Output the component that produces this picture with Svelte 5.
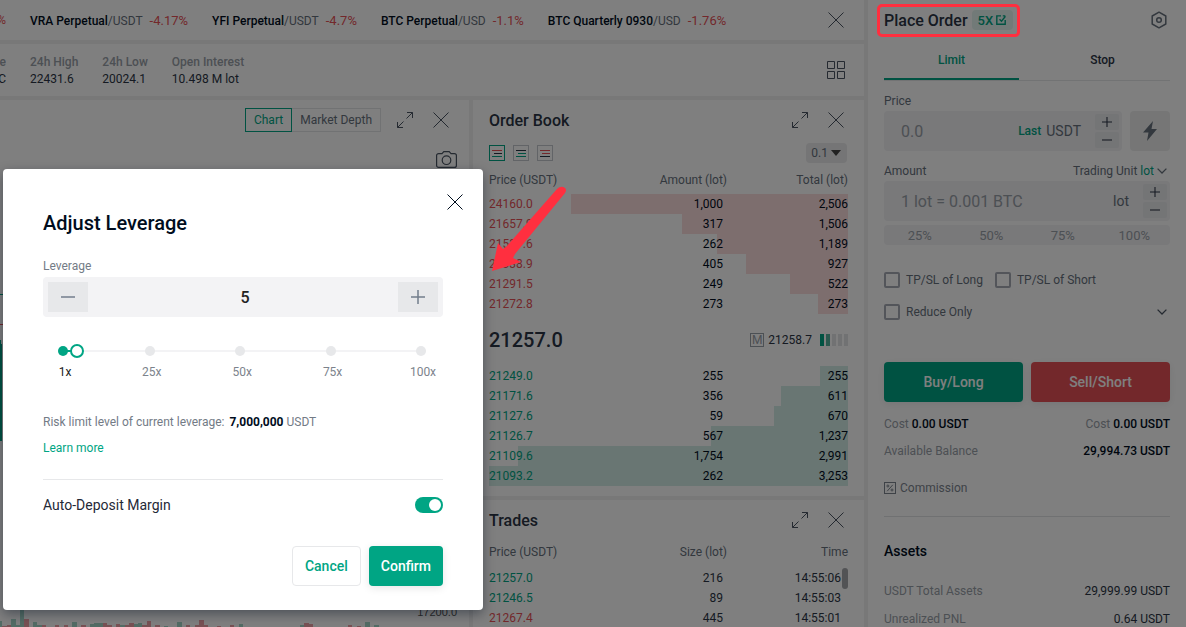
<script>
    let leverage = $state(5);
    let autoDeposit = $state(true);

    const tickers = [
        { name: 'VRA Perpetual', unit: 'USDT', change: '-4.17%' },
        { name: 'YFI Perpetual', unit: 'USDT', change: '-4.7%' },
        { name: 'BTC Perpetual', unit: 'USD', change: '-1.1%' },
        { name: 'BTC Quarterly 0930', unit: 'USD', change: '-1.76%' }
    ];
    const stats = [
        ['24h High', '22431.6'],
        ['24h Low', '20024.1'],
        ['Open Interest', '10.498 M lot']
    ];
    const asks = [
        ['24160.0', 1000, 2506],
        ['21657.9', 317, 1506],
        ['21537.6', 262, 1189],
        ['21338.9', 405, 927],
        ['21291.5', 249, 522],
        ['21272.8', 273, 273]
    ];
    const bids = [
        ['21249.0', 255, 255],
        ['21171.6', 356, 611],
        ['21127.6', 59, 670],
        ['21126.7', 567, 1237],
        ['21109.6', 1754, 2991],
        ['21093.2', 262, 3253]
    ];
    const trades = [
        ['21257.0', '216', '14:55:06', 'up'],
        ['21246.5', '89', '14:55:03', 'up'],
        ['21267.4', '445', '14:55:01', 'down']
    ];
    const maxTotal = 3253;
    const depth = (total) => 100 - (total / maxTotal) * 100;
    const num = (n) => n.toLocaleString('en-US');

    // x, width, height, up
    const volumes = [
        [0, 2, 6, 1], [2, 5, 1, 0], [7, 4, 2, 0], [11, 5, 8, 1], [16, 4, 2, 1], [20, 4, 17, 1], [24, 5, 8, 0],
        [33, 4, 5, 1], [37, 5, 2, 1], [42, 4, 2, 0], [55, 4, 2, 0], [64, 4, 2, 0], [72, 5, 5, 1],
        [81, 5, 2, 0], [90, 4, 3, 1], [94, 9, 4, 1], [103, 4, 4, 0], [107, 5, 2, 0], [116, 4, 3, 0],
        [120, 5, 2, 1], [125, 4, 2, 0], [129, 5, 4, 0], [134, 4, 3, 1], [138, 4, 4, 1], [142, 5, 2, 0],
        [147, 4, 6, 0], [155, 5, 2, 0], [164, 4, 1, 1], [177, 5, 5, 1], [186, 4, 2, 0], [195, 4, 2, 0],
        [199, 5, 7, 0], [204, 4, 2, 0], [217, 4, 1, 0], [230, 4, 2, 0], [239, 4, 3, 1], [300, 4, 2, 1],
        [304, 5, 4, 0], [309, 4, 3, 0], [348, 4, 2, 0], [357, 4, 1, 0], [365, 5, 5, 1], [374, 5, 2, 1]
    ];
    const ticks = [1, 25, 50, 75, 100];

    function step(by) {
        leverage = Math.min(100, Math.max(1, Number(leverage) + by));
    }
</script>

{#snippet closeIcon()}
    <svg width="16" height="16" viewBox="0 0 16 16" fill="none" stroke="currentColor"><path d="M.5.5l15 15M15.5.5l-15 15" /></svg>
{/snippet}
{#snippet expandIcon()}
    <svg width="16" height="16" viewBox="0 0 16 16" fill="none" stroke="currentColor"><path d="M10 .5h5.5V6M15.5.5l-6 6M.5 10v5.5H6M.5 15.5l6-6" /></svg>
{/snippet}
{#snippet plus(size)}
    <svg width={size} height={size} viewBox="0 0 14 14" fill="none" stroke="currentColor" stroke-width="1.5"><path d="M0 7h14M7 0v14" /></svg>
{/snippet}
{#snippet minus(size)}
    <svg width={size} height={size} viewBox="0 0 14 14" fill="none" stroke="currentColor" stroke-width="1.5"><path d="M0 7h14" /></svg>
{/snippet}
{#snippet chevron()}
    <svg width="10" height="6" viewBox="0 0 10 6" fill="none" stroke="currentColor" stroke-width="1.3"><path d="M.6.6L5 5 9.4.6" /></svg>
{/snippet}
{#snippet bookRows(rows, side)}
    {#each rows as [price, amount, total]}
        <tr class={side} style="--from: {depth(total)}%">
            <td>{price}</td>
            <td>{num(amount)}</td>
            <td>{num(total)}</td>
        </tr>
    {/each}
{/snippet}

<div class="page">
    <main>
        <div class="panel ticker">
            <div class="clipped down">%</div>
            {#each tickers as t}
                <div class="ticker-item"><span><b>{t.name}</b>/{t.unit}</span><span class="down">{t.change}</span></div>
            {/each}
            <button class="icon push" aria-label="Close ticker">{@render closeIcon()}</button>
        </div>

        <div class="panel stats">
            <dl class="clipped"><dt>e</dt><dd>C</dd></dl>
            {#each stats as [label, value]}
                <dl><dt>{label}</dt><dd>{value}</dd></dl>
            {/each}
            <button class="icon push" aria-label="Layout">
                <svg width="18" height="18" viewBox="0 0 18 18" fill="none" stroke="currentColor"><path d="M.5.5h7v7h-7zM10.5.5h7v7h-7zM.5 10.5h7v7h-7zM10.5 10.5h7v7h-7z" /></svg>
            </button>
        </div>

        <div class="columns">
            <section class="panel chart">
                <header class="panel-head">
                    <div class="segmented">
                        <button class="on">Chart</button><button>Market Depth</button>
                    </div>
                    <button class="icon" aria-label="Expand chart">{@render expandIcon()}</button>
                    <button class="icon" aria-label="Close chart">{@render closeIcon()}</button>
                </header>
                <div class="chart-body">
                    <svg class="plot" width="469" height="487" viewBox="0 0 469 487">
                        <rect x="0" y="154" width="3" height="1" fill="#00a584" />
                        <rect x="0" y="184" width="3" height="1" fill="#e65157" />
                        <rect x="0" y="200" width="1" height="4" fill="#00a584" />
                        <rect x="0" y="204" width="2" height="97" fill="#00a584" />
                        {#each volumes as [x, w, h, up]}
                            <rect {x} y={487 - h} width={w} height={h} fill={up ? '#a6d8ca' : '#f0a3a8'} />
                        {/each}
                        <text x="457" y="476" text-anchor="end">17200.0</text>
                    </svg>
                    <button class="icon camera" aria-label="Snapshot">
                        <svg width="21" height="17" viewBox="0 0 21 17" fill="none" stroke="currentColor" stroke-width="1.2"><path d="M2.6 2.6h3.400l1.800-2h5.400l1.800 2h3.400a2 2 0 0 1 2 2v9.800a2 2 0 0 1-2 2H2.600a2 2 0 0 1-2-2V4.600a2 2 0 0 1 2-2z" /><circle cx="10.5" cy="9.2" r="4.3" /></svg>
                    </button>
                </div>
            </section>

            <div class="books">
                <section class="panel book">
                    <header class="panel-head">
                        <h2>Order Book</h2>
                        <button class="icon" aria-label="Expand order book">{@render expandIcon()}</button>
                        <button class="icon" aria-label="Close order book">{@render closeIcon()}</button>
                    </header>
                    <div class="book-tools">
                        {#each [['#e65157', '#2b3545', '#00a584'], ['#2b3545', '#00a584', '#00a584'], ['#e65157', '#e65157', '#2b3545']] as c, i}
                            <button class="icon mode" class:on={i === 0} aria-label="Book view {i + 1}">
                                <svg width="16" height="16" viewBox="0 0 16 16" fill="none">
                                    <rect x=".5" y=".5" width="15" height="15" stroke="currentColor" />
                                    <path d="M3 5.5h10" stroke={c[0]} /><path d="M5 8.5h8" stroke={c[1]} /><path d="M3 11.5h10" stroke={c[2]} />
                                </svg>
                            </button>
                        {/each}
                        <button class="precision">0.1 <svg width="10" height="6" viewBox="0 0 10 6"><path d="M0 0h10L5 6z" fill="currentColor" /></svg></button>
                    </div>
                    <table>
                        <thead><tr><th>Price (USDT)</th><th>Amount (lot)</th><th>Total (lot)</th></tr></thead>
                        <tbody>{@render bookRows(asks, 'ask')}</tbody>
                    </table>
                    <div class="last-price">
                        <strong>21257.0</strong>
                        <span class="mark">M</span>
                        <span>21258.7</span>
                        <span class="adl"><i class="full"></i><i class="half"></i><i></i><i></i><i></i></span>
                    </div>
                    <table>
                        <tbody>{@render bookRows(bids, 'bid')}</tbody>
                    </table>
                </section>

                <section class="panel trades">
                    <header class="panel-head">
                        <h2>Trades</h2>
                        <button class="icon" aria-label="Expand trades">{@render expandIcon()}</button>
                        <button class="icon" aria-label="Close trades">{@render closeIcon()}</button>
                    </header>
                    <div class="trade-list">
                        <table>
                            <thead><tr><th>Price (USDT)</th><th>Size (lot)</th><th>Time</th></tr></thead>
                            <tbody>
                                {#each trades as [price, size, time, dir]}
                                    <tr><td class={dir}>{price}</td><td>{size}</td><td>{time}</td></tr>
                                {/each}
                            </tbody>
                        </table>
                        <div class="scroll-thumb"></div>
                    </div>
                </section>
            </div>
        </div>
    </main>

    <aside class="panel">
        <header class="order-head">
            <h2>Place Order</h2>
            <button class="lev-badge">5X
                <svg width="10" height="10" viewBox="0 0 10 10" fill="none" stroke="currentColor" stroke-width="1.4"><path d="M5 .9H.8v8.300h8.400V5M3.500 4.300l2 2L9.500 1.200M6.800.9h2.500" /></svg>
            </button>
            <button class="icon push" aria-label="Settings">
                <svg width="16" height="18" viewBox="0 0 16 18" fill="none" stroke="currentColor" stroke-width="1.5"><path d="M8 1.200l6.800 3.800v8L8 16.800 1.200 13V5z" stroke-linejoin="round" /><circle cx="8" cy="9" r="2.3" /></svg>
            </button>
        </header>
        <nav class="tabs">
            <a class="on" href="#limit">Limit</a>
            <a href="#stop">Stop</a>
        </nav>

        <div class="field-label"><label for="price">Price</label></div>
        <div class="price-row">
            <div class="field">
                <input id="price" placeholder="0.0" />
                <button class="last">Last</button>
                <span class="unit">USDT</span>
                <div class="stepper"><button aria-label="Raise price">{@render plus(10)}</button><button aria-label="Lower price">{@render minus(10)}</button></div>
            </div>
            <button class="flash" aria-label="Market price">
                <svg width="14" height="20" viewBox="0 0 14 20"><path d="M10 0L0 11.500h5.500L4 20l10-12H8.500z" fill="currentColor" /></svg>
            </button>
        </div>
        <div class="field-label">
            <label for="amount">Amount</label>
            <button class="trading-unit">Trading Unit <span>lot</span> {@render chevron()}</button>
        </div>
        <div class="field">
            <input id="amount" placeholder="1 lot = 0.001 BTC" />
            <span class="unit">lot</span>
            <div class="stepper"><button aria-label="Raise amount">{@render plus(10)}</button><button aria-label="Lower amount">{@render minus(10)}</button></div>
        </div>
        <div class="percents">
            {#each ['25%', '50%', '75%', '100%'] as p}<button>{p}</button>{/each}
        </div>

        <div class="checks">
            <label><input type="checkbox" />TP/SL of Long</label>
            <label><input type="checkbox" />TP/SL of Short</label>
        </div>
        <div class="checks">
            <label><input type="checkbox" />Reduce Only</label>
            <button class="icon more" aria-label="More options">{@render chevron()}</button>
        </div>

        <div class="actions">
            <button class="buy">Buy/Long</button>
            <button class="sell">Sell/Short</button>
        </div>
        <div class="line"><span>Cost <b>0.00 USDT</b></span><span>Cost <b>0.00 USDT</b></span></div>
        <div class="line"><span>Available Balance</span><b>29,994.73 USDT</b></div>
        <a class="commission" href="#commission">
            <svg width="12" height="12" viewBox="0 0 12 12" fill="none" stroke="currentColor"><rect x=".5" y=".5" width="11" height="11" /><path d="M8.8 2.800l-5.600 6.400" /><circle cx="3.9" cy="4" r="1" /><circle cx="8" cy="8" r="1" /></svg>
            Commission
        </a>
        <h3>Assets</h3>
        <div class="line asset"><span>USDT Total Assets</span><em>29,999.99 USDT</em></div>
        <div class="line asset"><span>Unrealized PNL</span><em>0.64 USDT</em></div>
    </aside>

    <div class="mask"></div>

    <div class="modal" role="dialog" aria-labelledby="modal-title">
        <button class="icon modal-close" aria-label="Close">{@render closeIcon()}</button>
        <h1 id="modal-title">Adjust Leverage</h1>
        <label class="lev-label" for="leverage">Leverage</label>
        <div class="lev-input">
            <button aria-label="Decrease" onclick={() => step(-1)}>{@render minus(14)}</button>
            <input id="leverage" bind:value={leverage} />
            <button aria-label="Increase" onclick={() => step(1)}>{@render plus(14)}</button>
        </div>
        <div class="slider" style="--done: {((leverage - 1) / 99) * 100}%">
            <div class="ticks">
                {#each ticks as t}
                    <div class="tick" class:on={t <= leverage}><i></i><span>{t}x</span></div>
                {/each}
            </div>
            <input type="range" min="1" max="100" bind:value={leverage} aria-label="Leverage slider" />
        </div>
        <p class="risk">Risk limit level of current leverage: <b>7,000,000</b> USDT</p>
        <a class="learn" href="#learn">Learn more</a>
        <label class="deposit">Auto-Deposit Margin <input type="checkbox" role="switch" bind:checked={autoDeposit} /></label>
        <div class="modal-foot">
            <button class="cancel">Cancel</button>
            <button class="confirm">Confirm</button>
        </div>
    </div>

    <div class="highlight"></div>
    <svg class="arrow" width="76" height="88" viewBox="0 0 76 88"><path d="M74 2Q70-1 66 3L16 60 12 63 7 57 1 85 30 76 22 72 24 68 74 7Q76 4 74 2z" fill="#ff2f3f" /></svg>
</div>

<style>
    :global(body) { font-family: Roboto, sans-serif; font-size: 12px; color: #2b3545; }
    .page {
        position: relative;
        display: grid;
        grid-template-columns: 1fr 318px;
        gap: 4px;
        height: 100vh;
        overflow: hidden;
        background: #f1f1f1;
    }
    button, input { font: inherit; color: inherit; }
    button { border: none; background: none; padding: 0; cursor: pointer; }
    input { border: none; background: none; min-width: 0; outline: none; }
    a { text-decoration: none; color: inherit; }
    h1, h2, h3, p, dl, dd { margin: 0; font-weight: 500; }
    dd { font-weight: 400; }
    b { font-weight: 500; color: #000d1d; }
    svg { display: block; }
    .panel { background: #fff; }
    .up { color: #00a584; }
    .down { color: #e65157; }
    .icon { display: flex; align-items: center; justify-content: center; color: #4a5462; }
    .push { margin-left: auto; }

    main { display: flex; flex-direction: column; gap: 4px; min-width: 0; }
    .ticker, .stats { display: flex; align-items: center; gap: 24px; padding-right: 20px; white-space: nowrap; }
    .ticker { height: 40px; }
    .ticker-item { display: flex; align-items: baseline; gap: 7px; color: #66707c; }
    .ticker-item .down { font-size: 13px; }
    .clipped { width: 6px; display: flex; flex-direction: column; align-items: flex-end; overflow: hidden; }
    .stats { height: 52px; padding-right: 19px; line-height: 17px; }
    .stats dl { padding-top: 2px; }
    dt { color: #99a0a8; }

    .columns { flex: 1; display: grid; grid-template-columns: 1fr 391px; gap: 4px; min-height: 0; }
    .chart { display: flex; flex-direction: column; min-width: 0; }
    .panel-head { display: flex; align-items: center; justify-content: flex-end; gap: 20px; height: 40px; padding-right: 20px; }
    h2 { padding-top: 2px; font-size: 16px; line-height: 20px; color: #2b3545; }
    .panel-head h2 { margin-right: auto; }
    .segmented { display: flex; height: 24px; margin-right: -4px; color: #66707c; }
    .segmented button { padding: 0 8px; border: 1px solid #e2e4e6; border-left: none; }
    .segmented .on { border: 1px solid #00a584; color: #00a584; }
    .chart-body { position: relative; flex: 1; overflow: hidden; }
    .plot text { font-family: "Liberation Sans", sans-serif; font-size: 11px; fill: #555; }
    .camera { position: absolute; top: 11px; right: 12px; }

    .books { display: flex; flex-direction: column; gap: 4px; min-height: 0; }
    .book, .trades { padding-left: 16px; }
    .book { padding-bottom: 10px; }
    .trades { flex: 1; }
    .book-tools { display: flex; align-items: center; gap: 8px; height: 26px; padding-right: 17px; }
    .mode { color: #c5c9ce; }
    .mode.on { color: #00a584; }
    .precision { display: flex; align-items: center; gap: 3px; height: 20px; margin-left: auto; padding: 0 6px 0 5px; border-radius: 4px; background: #eaebec; color: #66707c; }
    .precision svg { color: #444; }
    table { width: calc(100% - 16px); border-collapse: collapse; table-layout: fixed; line-height: 20px; }
    th { padding: 4px 0; font-weight: 400; text-align: left; color: #66707c; }
    th:nth-child(2), td:nth-child(2) { width: 119px; text-align: right; }
    th:nth-child(3), td:nth-child(3) { width: 121px; text-align: right; }
    td { padding: 0; color: #000d1d; }
    td:nth-child(2) { padding-right: 4px; }
    .ask { --bar: #fadcdc; }
    .bid { --bar: #d2ece6; }
    .ask, .bid { background: linear-gradient(90deg, transparent var(--from), var(--bar) var(--from)); }
    .ask td:first-child, td.down { color: #e65157; }
    .bid td:first-child, td.up { color: #00a584; }
    .last-price { display: flex; align-items: center; gap: 4px; height: 52px; padding-right: 16px; }
    .last-price strong { margin-right: auto; font-size: 20px; font-weight: 500; }
    .mark { border: 1px solid #99a0a8; width: 12px; line-height: 12px; text-align: center; color: #99a0a8; }
    .adl { display: flex; gap: 2px; margin-left: 4px; }
    .adl i { width: 4px; height: 12px; background: #e2e4e6; }
    .adl .full { background: #00a584; }
    .adl .half { background: #55b09c; }
    .trade-list { position: relative; }
    .trade-list th { padding: 2px 0 6px; }
    .trade-list td:nth-child(3) { padding-right: 7px; color: #2b3545; }
    .trade-list td:nth-child(2) { color: #2b3545; }
    .scroll-thumb { position: absolute; top: 28px; right: 16px; width: 6px; height: 21px; border-radius: 3px; background: #a4a7ab; }

    aside { padding: 0 16px; white-space: nowrap; }
    .order-head { display: flex; align-items: center; gap: 4px; height: 40px; padding-right: 3px; }
    .lev-badge { display: flex; align-items: center; gap: 3px; height: 20px; padding: 0 7px 0 6px; border-radius: 4px; background: #e5f4f0; color: #00a584; font-size: 13px; font-weight: 500; }
    .order-head .icon { color: #66707c; }
    .tabs { display: grid; grid-template-columns: 1fr 1fr; gap: 16px; line-height: 36px; border-bottom: 1px solid #e5e6e8; text-align: center; font-weight: 500; }
    .tabs a { padding-top: 2px; border-bottom: 2px solid transparent; }
    .tabs .on { color: #00a584; border-color: #00a584; }
    .field-label { display: flex; justify-content: space-between; align-items: center; height: 20px; margin-top: 10px; color: #66707c; }
    .price-row { display: flex; gap: 8px; }
    .field { flex: 1; display: flex; align-items: center; height: 40px; padding: 0 3px 0 17px; border-radius: 4px; background: #f2f2f4; box-sizing: border-box; }
    .field input { flex: 1; width: 60px; font-size: 16px; padding: 0; }
    .field input::placeholder { color: #99a0a8; }
    .last { color: #00a584; font-weight: 500; margin-right: 5px; }
    .unit { font-size: 14px; color: #66707c; margin-right: 14px; }
    .stepper { display: grid; gap: 2px; }
    .stepper button { display: flex; align-items: center; justify-content: center; width: 24px; height: 16px; border-radius: 2px; background: #e9eaec; }
    .flash { display: flex; align-items: center; justify-content: center; width: 40px; border-radius: 4px; background: #eceded; color: #66707c; }
    .trading-unit { display: flex; align-items: center; gap: 3px; margin-right: 3px; }
    .trading-unit span { color: #00a584; }
    .percents { display: grid; grid-template-columns: repeat(4, 1fr); margin-top: 4px; height: 20px; border-radius: 4px; background: #f2f2f4; color: #99a0a8; font-size: 13px; }
    .checks { display: flex; align-items: center; gap: 12px; height: 16px; margin-top: 16px; color: #66707c; }
    .percents + .checks { margin-top: 27px; }
    .checks label { display: flex; align-items: center; gap: 6px; }
    .checks input { appearance: none; width: 16px; height: 16px; margin: 0; border: 2px solid #a7abb5; border-radius: 2px; }
    .more { margin: 0 3px 0 auto; }
    .actions { display: grid; grid-template-columns: 1fr 1fr; gap: 8px; margin: 42px 0 9px; }
    .actions button { height: 40px; border-radius: 4px; font-size: 14px; font-weight: 500; color: #fff; box-shadow: 0 2px 8px rgba(0, 13, 29, 0.08); }
    .buy { background: #00a584; }
    .sell { background: #e65157; }
    .line { display: flex; justify-content: space-between; line-height: 27px; color: #99a0a8; }
    .commission { display: flex; align-items: center; gap: 4px; margin-top: 13px; padding-bottom: 18px; line-height: 20px; border-bottom: 1px solid #e0e2e4; color: #7d858f; }
    h3 { margin: 24px 0 16px; font-size: 14px; line-height: 20px; color: #000d1d; }
    .asset { line-height: 28px; }
    .line em { font-style: normal; color: #2b3545; }

    .mask { position: absolute; inset: 0; background: rgba(0, 0, 0, 0.5); }

    .modal {
        position: absolute;
        top: 169px;
        left: 3px;
        width: 480px;
        box-sizing: border-box;
        padding: 40px 40px 24px;
        border-radius: 4px;
        background: #fff;
        box-shadow: 0 4px 12px rgba(0, 13, 29, 0.4);
    }
    .modal-close { position: absolute; top: 25px; right: 20px; color: #000d1d; }
    h1 { font-size: 20px; line-height: 28px; color: #000d1d; }
    .lev-label { display: block; margin-top: 20px; line-height: 18px; color: #737b86; }
    .lev-input { display: flex; align-items: center; height: 40px; margin-top: 2px; padding: 0 5px; border-radius: 4px; background: #f3f3f5; box-sizing: border-box; }
    .lev-input button { display: flex; align-items: center; justify-content: center; width: 40px; height: 30px; background: #e7e8ea; color: #737e8c; }
    .lev-input input { flex: 1; padding: 0 0 0 4px; text-align: center; font-size: 16px; font-weight: 500; color: #222; }
    .slider { display: grid; align-items: start; margin: 27px 17px 0 15px; }
    .slider > * { grid-area: 1 / 1; }
    .ticks { display: grid; grid-template-columns: 24fr 25fr 25fr 25fr 10px; padding-top: 2px; background: linear-gradient(#f3f3f5, #f3f3f5) 0 6px / 100% 2px no-repeat; }
    .tick { display: flex; flex-direction: column; align-items: center; gap: 7px; width: 10px; line-height: 18px; color: #7c838c; }
    .tick i { width: 10px; height: 10px; border-radius: 50%; background: #e7e8ea; }
    .tick span { padding-left: 4px; }
    .tick.on i { background: #00a584; }
    .tick.on { color: #222; }
    .slider input { appearance: none; height: 14px; margin: 0 -2px; background: linear-gradient(#00a584, #00a584) 7px 6px / var(--done) 2px no-repeat; }
    .slider input::-webkit-slider-thumb { appearance: none; width: 14px; height: 14px; border: 2px solid #00a584; border-radius: 50%; background: #fff; box-sizing: border-box; }
    .risk { margin-top: 31px; line-height: 20px; font-weight: 400; color: #737b86; }
    .risk b { font-weight: 700; margin-left: 2px; }
    .learn { display: block; margin-top: 6px; line-height: 20px; color: #00a584; }
    .deposit { display: flex; justify-content: space-between; align-items: center; height: 50px; margin-top: 21px; border-top: 1px solid #e7e8ea; font-size: 14px; color: #1f2937; }
    .deposit input { appearance: none; display: flex; width: 28px; height: 16px; margin: 0; padding: 2px; box-sizing: border-box; border-radius: 8px; background: #c5c9ce; }
    .deposit input::before { content: ""; width: 12px; height: 12px; border-radius: 50%; background: #fff; }
    .deposit input:checked { background: #00a584; justify-content: flex-end; }
    .modal-foot { display: flex; justify-content: flex-end; gap: 8px; margin-top: 16px; }
    .modal-foot button { height: 40px; padding: 0 12px; border-radius: 4px; font-size: 14px; font-weight: 500; }
    .cancel { border: 1px solid #e7e8ea; color: #00a584; }
    .confirm { background: #00a584; color: #fff; box-shadow: 0 2px 8px rgba(0, 13, 29, 0.1); }

    .highlight { position: absolute; top: 4px; right: 166px; width: 143px; height: 33px; box-sizing: border-box; border: 3px solid #ff2f3f; border-radius: 5px; }
    .arrow { position: absolute; top: 186px; right: 619px; }
</style>
